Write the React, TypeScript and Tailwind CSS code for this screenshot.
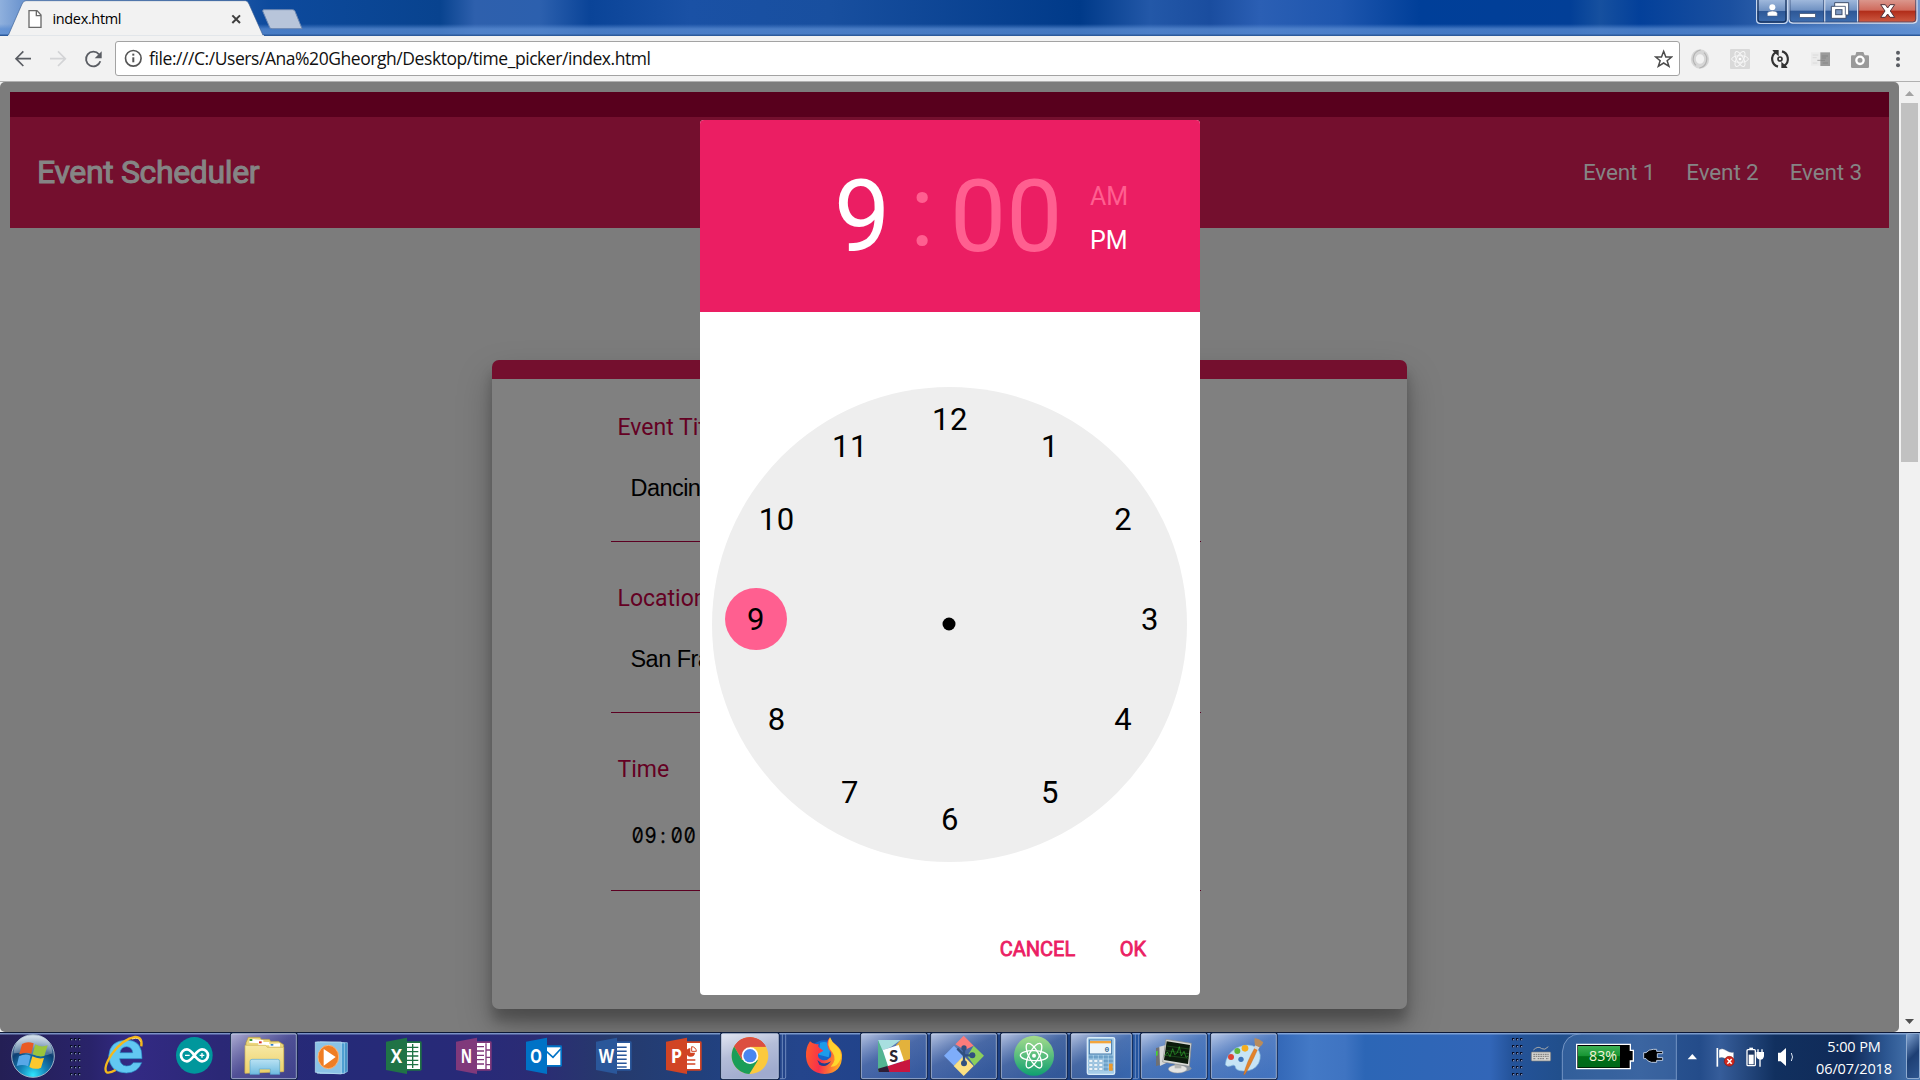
import React from "react";

const UI = "font-['Open_Sans','Noto_Sans',sans-serif]";

type Pt = { n: number; x: number; y: number };
const DIAL: Pt[] = Array.from({ length: 12 }, (_, i) => {
  const n = i + 1;
  const a = (n * Math.PI) / 6;
  return { n, x: 238 + 200 * Math.sin(a) + (n === 9 ? 6 : 0), y: 232 - 200 * Math.cos(a) };
});

function Svg({ vb, w, h, className = "", children }: { vb: string; w: number; h: number; className?: string; children: React.ReactNode }) {
  return (
    <svg viewBox={vb} width={w} height={h} className={"block shrink-0 " + className}>
      {children}
    </svg>
  );
}

/* ---------- window frame ---------- */

function TitleBar() {
  return (
    <div className="relative flex h-9 shrink-0 items-start bg-[#083f93] bg-[linear-gradient(180deg,rgba(90,140,210,0)_0,rgba(90,140,210,0)_24px,rgba(90,140,210,.75)_29px,rgba(90,140,210,.75)_34px,#2c5a9b_35px),linear-gradient(90deg,#8fb0dd_0,#6f97d0_20px,#0d4a9d_270px,#08438f_440px,#2e60ad_475px,#2c60ae_540px,#0a4498_590px,#1a51a5_690px,#184f9f_830px,#003a89_1080px,#2358a8_1150px,#1a4d9f_1210px,#2b5fb4_1260px,#1e56ae_1340px,#003f99_1420px,#023f97_1570px,#16509f_1600px,#03409a_1640px,#1b50a0_1730px,#6f97cf_1920px)]">
      <div className="relative ml-2 flex h-9 w-[256px] items-center">
        <Svg vb="24 0 768 108" w={256} h={36} className="absolute inset-0">
          <path d="M24 108 L66 12 Q70 2 78 2 H736 Q743 2 747 12 L790 108Z" fill="#f2f2f2" stroke="#3a5f96" strokeWidth="2" />
          <path d="M24 108H792" stroke="#f2f2f2" strokeWidth="5" />
          <path d="M87 32H111L123 45V82H87Z" fill="#fff" stroke="#6a6a6a" strokeWidth="4" />
          <path d="M109 32V47H123" fill="none" stroke="#6a6a6a" strokeWidth="4" />
          <path d="M697 46L720 69M720 46L697 69" stroke="#3f3f3f" strokeWidth="6" />
        </Svg>
        <span className={`${UI} relative ml-[44.5px] mt-[2px] text-[14.5px] leading-none tracking-[-0.35px] text-black`}>index.html</span>
      </div>
      <Svg vb="786 0 126 108" w={42} h={36} className="-ml-[2px]">
        <path d="M790 29H878Q883 29 885 34L906 86H816Q811 86 809 82L788 33Z" fill="#b8c5da" stroke="#6c87b1" strokeWidth="3" />
      </Svg>
      <div className="flex-1" />
      <Svg vb="765 0 495 78" w={165} h={26}>
        <defs>
          <linearGradient id="glass" x1="0" y1="0" x2="0" y2="1">
            <stop offset="0" stopColor="#a5bddf" /><stop offset=".48" stopColor="#6f91c2" /><stop offset=".5" stopColor="#2d5796" /><stop offset="1" stopColor="#3e6eb0" />
          </linearGradient>
          <linearGradient id="red" x1="0" y1="0" x2="0" y2="1">
            <stop offset="0" stopColor="#dc9c92" /><stop offset=".48" stopColor="#cf6a5c" /><stop offset=".5" stopColor="#b02b18" /><stop offset="1" stopColor="#cf5d45" />
          </linearGradient>
        </defs>
        <path d="M770 -4V60Q770 70 780 70H852Q862 70 862 60V-4Z" fill="url(#glass)" stroke="#c6d6ee" strokeWidth="4" />
        <path d="M774 -4V58Q774 66 782 66H850Q858 66 858 58V-4" fill="none" stroke="#16325f" strokeWidth="4" />
        <circle cx="817" cy="22" r="9" fill="#fff" />
        <path d="M802 48V40Q804 33 817 33Q831 33 832 40V48Z" fill="#fff" stroke="#4a5d80" strokeWidth="1.5" />
        <path d="M867 -4V60Q867 69 877 69H974V-4Z" fill="url(#glass)" />
        <path d="M974 -4V69H1073V-4Z" fill="url(#glass)" />
        <path d="M1073 -4V69H1240Q1250 69 1250 60V-4Z" fill="url(#red)" />
        <path d="M867 -4V58Q867 69 877 69H1240Q1251 69 1251 58V-4M974 0V69M1073 0V69" fill="none" stroke="#d2ddef" strokeWidth="4" />
        <path d="M870 -4V57Q870 66 880 66H1238Q1247 66 1247 57V-4M971 0V66M1076 0V66" fill="none" stroke="#27406d" strokeWidth="2" />
        <rect x="899" y="41" width="47" height="11" fill="#fff" stroke="#41516f" strokeWidth="2" />
        <path d="M1004 8H1046V45H1038V55H994V19H1004Z" fill="#fff" stroke="#41516f" strokeWidth="3" />
        <path d="M1004 19H1036V45" fill="none" stroke="#41516f" strokeWidth="2.5" />
        <rect x="1007" y="29" width="19" height="15" fill="#7d98c2" stroke="#41516f" strokeWidth="3" />
        <path d="M1142 14H1156L1163 24L1170 14H1184L1171 33L1184 52H1170L1163 42L1156 52H1142L1155 33Z" fill="#fff" stroke="#4f3038" strokeWidth="3" />
      </Svg>
    </div>
  );
}

function Toolbar() {
  return (
    <div className="flex h-[46px] shrink-0 items-start border-b border-[#b0b0b0] bg-[#f2f2f2]">
      <Svg vb="0 108 345 135" w={115} h={45}>
        <path d="M93 176H50M70 154L48 176L70 198" fill="none" stroke="#5a5d63" strokeWidth="5" />
        <path d="M150 176H193M174 154L196 176L174 198" fill="none" stroke="#d3d4d6" strokeWidth="5" />
        <path d="M297 163A22 22 0 1 0 301 184" fill="none" stroke="#5a5d63" strokeWidth="5.5" />
        <path d="M305 154V175H284Z" fill="#5a5d63" />
      </Svg>
      <div className="mt-[5px] flex h-[35px] w-[1565px] items-center rounded-[3px] border border-[#a3a3a3] bg-white">
        <Svg vb="372 150 56 56" w={18.6} h={18.6} className="ml-2">
          <circle cx="400" cy="178" r="23.5" fill="none" stroke="#555" strokeWidth="5" />
          <path d="M400 175V190" stroke="#555" strokeWidth="6" />
          <path d="M400 164V170" stroke="#555" strokeWidth="6" />
        </Svg>
        <span className={`${UI} ml-[6.5px] flex-1 text-[17.5px] leading-none tracking-[-0.44px] text-[#111]`}>file:///C:/Users/Ana%20Gheorgh/Desktop/time_picker/index.html</span>
        <Svg vb="460 148 58 60" w={19.3} h={20} className="mr-[6px]">
          <path d="M489 155L495.500 172H513L499.500 183L505 200L489 190L473 200L478.500 183L465 172H482.500Z" fill="#fff" stroke="#4c4c4c" strokeWidth="4.500" />
        </Svg>
      </div>
      <Svg vb="540 108 720 135" w={240} h={45}>
        <ellipse cx="600" cy="177" rx="20" ry="22" fill="none" stroke="#d6d6d6" strokeWidth="15" />
        <path d="M602 150A27 27 0 0 0 588 196M598 204A27 27 0 0 0 612 158" fill="none" stroke="#b4b4b4" strokeWidth="3.500" />
        <rect x="690" y="147" width="60" height="60" rx="3" fill="#d9d9d9" />
        <g fill="none" stroke="#f6f6f6" strokeWidth="3">
          <ellipse cx="720" cy="177" rx="25" ry="10" />
          <ellipse cx="720" cy="177" rx="25" ry="10" transform="rotate(60 720 177)" />
          <ellipse cx="720" cy="177" rx="25" ry="10" transform="rotate(120 720 177)" />
        </g>
        <circle cx="720" cy="177" r="4" fill="#fff" />
        <g fill="none" stroke="#333" strokeWidth="6.500">
          <path d="M834 200A24 24 0 0 1 827 157" />
          <path d="M846 154A24 24 0 0 1 853 197" />
          <circle cx="840" cy="177" r="6" strokeWidth="5" />
        </g>
        <path d="M817 150H836V169L829 163L822 157Z M863 204H844V185L851 191L858 197Z" fill="#333" />
        <rect x="933" y="157" width="28" height="40" fill="#ebebeb" />
        <rect x="961" y="157" width="29" height="41" fill="#9b9b9b" />
        <path d="M938 165H955M938 173H950M938 189H952" stroke="#dadada" strokeWidth="3" />
        <path d="M952 181H961" stroke="#a5a5a5" strokeWidth="3" />
        <path d="M961 181H975M965 168H984M965 174H978M968 189H984" stroke="#858585" strokeWidth="2.500" />
        <path d="M1056 166H1066L1069 156H1090L1094 166H1104Q1107 166 1107 170V200Q1107 204 1103 204H1057Q1053 204 1053 200V170Q1053 166 1056 166Z" fill="#9a9a9a" />
        <circle cx="1080" cy="181" r="11" fill="#9a9a9a" stroke="#fff" strokeWidth="7" />
        <g fill="#5a5d63"><circle cx="1194" cy="158" r="6" /><circle cx="1194" cy="177" r="6" /><circle cx="1194" cy="196" r="6" /></g>
      </Svg>
    </div>
  );
}

/* ---------- web page ---------- */

function Field({ label, value, className = "", mono = false }: { label: string; value: string; className?: string; mono?: boolean }) {
  return (
    <div className={"flex w-[590px] flex-col border-b border-[#5c0022] " + className}>
      <label className="ml-[6.5px] h-7 pt-px text-[23px] leading-7 text-[#640023]">{label}</label>
      {mono ? (
        <div className="ml-[20px] mt-[39px] flex h-7 text-[21px] leading-7 text-black font-['Inter',sans-serif] [-webkit-text-stroke:0.25px_#000]" style={{ fontFeatureSettings: '"zero"' }}>
          {value.split("").map((c, i) => (
            <span key={i} className="flex w-[13px] justify-center"><span className="scale-x-90">{c}</span></span>
          ))}
        </div>
      ) : (
        <div className="ml-[19.5px] mt-[33px] h-7 text-[23.5px] leading-7 tracking-[-0.55px] text-black font-['Liberation_Sans',Arial,sans-serif]">{value}</div>
      )}
    </div>
  );
}

function TimePicker() {
  return (
    <div className="absolute left-[700px] top-[38px] flex h-[875px] w-[500px] flex-col overflow-hidden rounded-[4px] bg-white">
      <div className="flex h-[192px] shrink-0 bg-[#eb1e63]">
        <div className="ml-[134px] mt-[38px] flex text-[100px] leading-[117px] text-[#ff5f90]">
          <span className="w-[75px] text-white">9</span>
          <span className="-mt-[6px] ml-px w-[40px]">:</span>
          <span className="w-[113px]">00</span>
        </div>
        <div className="ml-[27px] mt-[55px] flex flex-col text-[25px] leading-[44px]">
          <span className="h-11 text-[#ff5f90]">AM</span>
          <span className="h-11 text-white">PM</span>
        </div>
      </div>
      <div className="relative ml-[12px] mt-[75px] size-[475px] shrink-0 rounded-full bg-[#eeeeee]">
        {DIAL.map(({ n, x, y }) => (
          <span
            key={n}
            className={"absolute flex size-[62px] -translate-1/2 items-center justify-center rounded-full pt-[2px] text-[31px] tracking-[0.5px] text-black " + (n === 9 ? "bg-[#ff5f90]" : "")}
            style={{ left: x, top: y }}
          >
            {n}
          </span>
        ))}
        <span className="absolute left-[237px] top-[237px] size-[13px] -translate-1/2 rounded-full bg-black" />
      </div>
      <div className="mt-[72px] flex justify-end pr-[54px] text-[20px] leading-[30px] text-[#eb1e63] [-webkit-text-stroke:0.8px_#eb1e63]">
        <span className="mr-[44.5px]">CANCEL</span>
        <span>OK</span>
      </div>
    </div>
  );
}

function Page() {
  return (
    <div className="flex min-h-0 flex-1 bg-[#f1f1f1]">
      <div className="relative w-[1899px] overflow-hidden rounded-[5px] bg-[#7c7c7c] px-[10px] pt-[10px] font-['Roboto',sans-serif]">
        <div className="h-[25px] bg-[#58001d]" />
        <header className="flex h-[111px] items-center justify-between bg-[#740f2e] px-[27px] text-[#858585]">
          <h1 className="-mt-[2px] text-[32px] tracking-[-0.36px] [-webkit-text-stroke:1px_#858585]">Event Scheduler</h1>
          <nav className="flex gap-[31px] text-[22.5px] tracking-[-0.12px]">
            <a>Event 1</a>
            <a>Event 2</a>
            <a>Event 3</a>
          </nav>
        </header>
        <section className="ml-[482px] mt-[132px] flex h-[649px] w-[915px] flex-col overflow-visible rounded-[7px] border-t-[19px] border-[#740f2e] bg-[#808080] pl-[119px] shadow-[0_17px_35px_rgba(0,0,0,.25),0_12px_12px_rgba(0,0,0,.22)]">
          <Field label="Event Title" value="Dancing" className="mt-[34px] h-[129px]" />
          <Field label="Location" value="San Francisco" className="mt-[42px] h-[129px]" />
          <Field label="Time" value="09:00" mono className="mt-[42px] h-[136px]" />
        </section>
        <TimePicker />
      </div>
      <div className="flex w-[21px] flex-col items-center">
        <Svg vb="0 0 21 21" w={21} h={21}><path d="M6 14L10.500 9L15 14Z" fill="#a3a3a3" /></Svg>
        <div className="h-[359px] w-[17px] bg-[#c1c1c1]" />
        <div className="flex-1" />
        <Svg vb="0 0 21 21" w={21} h={21}><path d="M6 8L10.500 13L15 8Z" fill="#505050" /></Svg>
      </div>
    </div>
  );
}

/* ---------- taskbar ---------- */

function OfficeApp({ x, dark, light, letter, children }: { x: number; dark: string; light: string; letter: string; children?: React.ReactNode }) {
  return (
    <g transform={`translate(${x} 0)`}>
      <rect x="60" y="64" width="47" height="88" rx="4" fill={dark} />
      <rect x="62" y="69" width="40" height="78" fill="#fff" />
      {children}
      <path d="M0 65L63 53V162L0 150Z" fill={light} />
      <text x="31" y="128" textAnchor="middle" fontFamily="Open Sans, sans-serif" fontWeight="700" fontSize="56" fill="#fff" textLength={letter === "W" ? 46 : 34} lengthAdjust="spacingAndGlyphs">{letter}</text>
    </g>
  );
}

const TILES: { x: number; open?: "plain" | "active" | "stack" | "activeStack"; art: React.ReactNode }[] = [
  {
    x: 267,
    art: (
      <>
        <path d="M425 128H400Q392 139 379 138Q361 136 359 116H426Q428 60 379 60Q329 62 326 108Q329 158 379 159Q414 158 425 128ZM360 98Q363 80 380 80Q397 81 398 98Z" fill="#62c8f2" stroke="#2b8ac4" strokeWidth="2" />
        <path d="M424 79Q428 50 405 51Q370 56 337 100Q308 143 320 157Q330 160 347 150" fill="none" stroke="#f4b81c" strokeWidth="7" />
        <path d="M421 65Q418 50 396 57" fill="none" stroke="#fde27a" strokeWidth="3" />
      </>
    ),
  },
  {
    x: 477,
    art: (
      <>
        <circle cx="583" cy="106" r="55" fill="#00979c" />
        <g fill="none" stroke="#fff" strokeWidth="8">
          <path d="M583 106C575 95 569 88 561 88A18 18 0 0 0 561 124C569 124 575 117 583 106C591 95 597 88 606 88A18 18 0 0 1 606 124C597 124 591 117 583 106Z" />
          <path d="M555 106H569M599 106H613M606 99V113" strokeWidth="4" />
        </g>
      </>
    ),
  },
  {
    x: 687,
    open: "active",
    art: (
      <>
        <path d="M738 68L745 52H780L784 58H808L812 64H835L851 74V152L735 158Z" fill="#ecd77c" stroke="#b29842" strokeWidth="2" />
        <path d="M748 62L757 57L790 60V70L748 68Z M775 66H808V76H775Z M808 72L840 70V80H808Z" fill="#fff" />
        <path d="M749 57H757V63H749Z" fill="#3d9a35" /><path d="M777 64H785V70H777Z" fill="#d8382a" /><path d="M812 72H820V77H812Z" fill="#2f7fc8" />
        <path d="M735 76H797L802 82H851V155L735 160Z" fill="url(#folder)" stroke="#cdb254" strokeWidth="2" />
        <path d="M750 163V124Q750 118 756 118H833Q839 118 839 124V163H811V147H778V163Z" fill="url(#ice)" stroke="#5ba9d4" strokeWidth="2" />
      </>
    ),
  },
  {
    x: 897,
    art: (
      <>
        <path d="M960 66L1042 68V155L1030 160L960 160Z" fill="#3b8dc4" stroke="#a6d8f2" strokeWidth="2" />
        <path d="M952 66L1034 69V160L952 160Z" fill="#4f9fd2" stroke="#b5dff5" strokeWidth="2" />
        <path d="M946 66H1024V162L946 157Z" fill="#8bc3e6" stroke="#c4e6f6" strokeWidth="2" />
        <ellipse cx="985" cy="111" rx="31" ry="35" fill="#ef7d24" stroke="#f9b57a" strokeWidth="3" />
        <path d="M971 87L1007 111L971 137Z" fill="#fff" />
      </>
    ),
  },
  {
    x: 1107,
    art: (
      <OfficeApp x={1158} dark="#1f7244" light="#207346" letter="X">
        <path d="M63 82H97M63 95H97M63 108H97M63 121H97M63 134H97M80 72V144" stroke="#1f7244" strokeWidth="4" />
      </OfficeApp>
    ),
  },
  {
    x: -123,
    art: (
      <OfficeApp x={-72} dark="#80397b" light="#80397b" letter="N">
        <path d="M63 80H84M63 93H84M63 106H84M63 119H84M63 132H84M90 70V148M92 90H104M92 112H104M92 134H104" stroke="#80397b" strokeWidth="4" />
      </OfficeApp>
    ),
  },
  {
    x: 87,
    art: (
      <g transform="translate(138 0)">
        <rect x="60" y="76" width="48" height="64" rx="4" fill="#0072c6" />
        <rect x="62" y="82" width="41" height="53" fill="#fff" />
        <path d="M62 95L81 112L104 87" fill="none" stroke="#0072c6" strokeWidth="5" />
        <path d="M0 65L63 53V162L0 150Z" fill="#0072c6" />
        <text x="30" y="129" textAnchor="middle" fontFamily="Open Sans, sans-serif" fontWeight="700" fontSize="58" fill="#fff" textLength="36" lengthAdjust="spacingAndGlyphs">O</text>
      </g>
    ),
  },
  {
    x: 297,
    art: (
      <OfficeApp x={348} dark="#2a579a" light="#2a579a" letter="W">
        <path d="M63 82H92M63 94H92M63 106H92M63 118H92M63 130H92M63 141H92" stroke="#2a579a" strokeWidth="4.500" />
      </OfficeApp>
    ),
  },
  {
    x: 507,
    art: (
      <OfficeApp x={558} dark="#d14424" light="#d14424" letter="P">
        <path d="M73 84A13 13 0 1 0 87 98H73Z" fill="#d14424" />
        <path d="M77 80A14 14 0 0 1 91 94H77Z" fill="#fff" stroke="#d14424" strokeWidth="3" />
        <path d="M63 120H88M63 132H88" stroke="#d14424" strokeWidth="5" />
      </OfficeApp>
    ),
  },
  {
    x: 717,
    open: "activeStack",
    art: (
      <>
        <circle cx="810" cy="107" r="55" fill="#fbc93d" />
        <path d="M810 107L762.400 79.500A55 55 0 0 1 857.600 79.500H810Z" fill="#dc4437" />
        <path d="M810 52A55 55 0 0 0 762.400 79.500L786 120L810 80H857.600A55 55 0 0 0 810 52Z" fill="#dc4e41" />
        <path d="M762.400 79.500A55 55 0 0 0 808 162L834 121L786 120Z" fill="#1a9d58" />
        <circle cx="810" cy="107" r="25" fill="#fff" />
        <circle cx="810" cy="107" r="20" fill="#4a86f0" />
      </>
    ),
  },
  {
    x: 927,
    art: (
      <>
        <circle cx="1033" cy="108" r="47" fill="#1565c9" />
        <path d="M1020 68Q1045 60 1052 82L1046 112L1016 104Z" fill="#1c9bea" />
        <path d="M990 64Q1000 75 1016 72Q1012 82 1022 86L1030 92L1014 102Q1012 116 1026 120Q1040 124 1052 112Q1058 100 1046 88Q1036 66 1050 52Q1054 66 1068 74Q1085 88 1086 104Q1088 158 1034 162Q982 158 978 110Q976 84 990 64Z" fill="url(#fire)" />
        <path d="M1050 52Q1056 68 1070 78Q1086 92 1082 116Q1072 142 1052 140Q1072 118 1058 98Q1036 76 1050 52Z" fill="#ffe32e" opacity=".85" />
        <path d="M1012 120Q1030 138 1053 124Q1038 146 1018 134Z" fill="#213f8e" />
      </>
    ),
  },
  {
    x: 1137,
    open: "plain",
    art: (
      <g>
        <path d="M1194 60H1262L1232 82L1204 92Z" fill="#a8dfe0" />
        <path d="M1262 60H1290V118L1268 128L1248 76Z" fill="#e3b23c" />
        <path d="M1194 60L1222 124L1230 142L1194 156Z" fill="#54b492" />
        <path d="M1222 138L1290 118V156H1228Z" fill="#c8153f" />
        <path d="M1194 146L1222 138L1228 156H1196Z" fill="#2e1d35" />
        <path d="M1208 90L1256 75L1272 122L1224 138Z" fill="#fff" />
        <text x="1241" y="125" textAnchor="middle" fontFamily="Lato, sans-serif" fontWeight="900" fontSize="48" fill="#2b2530">S</text>
      </g>
    ),
  },
  {
    x: -93,
    open: "plain",
    art: (
      <>
        <path d="M11 47L41 77L14 90L-14 73Z" fill="#fb7c7b" />
        <path d="M41 77L72 107L43 137L22 108Z" fill="#8bcf5c" />
        <path d="M-18 77L12 107L-18 137L-48 107Z" fill="#7eadfa" />
        <path d="M11 107L41 138L11 168L-19 138Z" fill="#fbe183" />
        <path d="M12 82V132M12 106H36M-8 86L12 106" stroke="#31507f" strokeWidth="7" />
        <circle cx="12" cy="84" r="8" fill="#31507f" /><circle cx="12" cy="130" r="9" fill="#31507f" /><circle cx="37" cy="106" r="9" fill="#31507f" />
      </>
    ),
  },
  {
    x: 117,
    open: "plain",
    art: (
      <>
        <circle cx="222" cy="107" r="60" fill="url(#atom)" />
        <g fill="none" stroke="#fff" strokeWidth="4">
          <ellipse cx="222" cy="107" rx="41" ry="15" transform="rotate(2 222 107)" />
          <ellipse cx="222" cy="107" rx="41" ry="15" transform="rotate(62 222 107)" />
          <ellipse cx="222" cy="107" rx="41" ry="15" transform="rotate(118 222 107)" />
        </g>
        <circle cx="222" cy="107" r="6" fill="#fff" />
      </>
    ),
  },
  {
    x: 327,
    open: "stack",
    art: (
      <>
        <rect x="382" y="53" width="82" height="110" rx="5" fill="#a5cce8" stroke="#d8ebf7" strokeWidth="4" />
        <rect x="388" y="60" width="67" height="42" fill="#eaf4fb" stroke="#3f74a5" strokeWidth="3" />
        <rect x="390" y="63" width="63" height="7" fill="#f3a53c" />
        <text x="441" y="96" textAnchor="middle" fontFamily="Liberation Mono, monospace" fontSize="24" fontWeight="700" fill="#3f6f98">0</text>
        {[0, 1, 2, 3].map((r) => [0, 1, 2, 3, 4].map((c) => (
          <rect key={`${r}-${c}`} x={387 + c * 15} y={107 + r * 12} width="11" height="8" rx="1" fill={r && c < 3 ? "#f3f8fb" : "#6fa3cb"} stroke="#5b8fb8" />
        )))}
        <rect x="447" y="131" width="11" height="21" fill="#ee9a2c" />
      </>
    ),
  },
  {
    x: 537,
    open: "plain",
    art: (
      <>
        <path d="M588 84L604 80V134L588 138Z" fill="#6f7072" /><path d="M598 80L620 74V128L600 138Z" fill="#d7d8d8" />
        <path d="M588 94L593 92V106L588 108Z" fill="#49d32f" />
        <ellipse cx="672" cy="145" rx="22" ry="9" fill="#8c97a4" />
        <ellipse cx="653" cy="147" rx="28" ry="12" fill="#e4e4e2" stroke="#9a9b99" strokeWidth="1.500" />
        <path d="M644 132H664V145H644Z" fill="#b4b5b3" />
        <path d="M618 58L694 70L688 139L608 126Z" fill="#d9dad7" stroke="#8a8b88" strokeWidth="2" />
        <path d="M620 64L690 75L684 132L612 120Z" fill="#0b1a0b" />
        <path d="M620 78L688 87M618 92L687 101M616 106L686 115" stroke="#225c22" strokeWidth="2" />
        <path d="M614 108L622 96L630 110L638 86L644 104L652 98L658 80L664 108L672 94L678 112L684 108" fill="none" stroke="#2fa82d" strokeWidth="2" />
      </>
    ),
  },
  {
    x: 747,
    open: "plain",
    art: (
      <>
        <path d="M796 134Q798 104 828 84Q868 66 890 84Q908 102 896 130Q882 154 850 153Q826 152 826 140Q824 132 812 138Q800 142 796 134Z" fill="#c7e4f5" stroke="#84b8dc" strokeWidth="2" />
        <circle cx="843" cy="118" r="8" fill="#3f74b8" />
        <circle cx="813" cy="111" r="9" fill="#dd4437" /><circle cx="832" cy="93" r="9" fill="#5fb53c" /><circle cx="855" cy="85" r="10" fill="#f5ad1e" />
        <path d="M851 164Q858 130 884 84L893 88Q872 136 855 163Z" fill="#e3832a" stroke="#b35e17" strokeWidth="1" />
        <path d="M881 84L886 75L899 80L894 91Z" fill="#d4d6d8" />
        <path d="M885 76Q882 62 884 54L897 58L910 67Q908 76 898 82Z" fill="#b98b5a" />
      </>
    ),
  },
];

function TaskTile({ x, open, art }: (typeof TILES)[number]) {
  const stack = open === "stack" || open === "activeStack";
  const active = open === "activeStack";
  const edge = x + (open === "activeStack" ? 180 : stack ? 189 : 204);
  return (
    <Svg vb={`${x} 36 210 144`} w={70} h={48}>
      {open && (
        <>
          {stack && (
            <path d={`M${edge + 3} 41H${edge + 10}V176H${edge + 3}M${edge + 12} 41H${edge + 16}Q${edge + 20} 41 ${edge + 20} 46V171Q${edge + 20} 176 ${edge + 16} 176H${edge + 10}`} fill="none" stroke="#7f9acb" strokeWidth="3" opacity=".8" />
          )}
          <rect x={x + 5} y="39" width={edge - x - 5} height="139" rx="5" fill="none" stroke="#0f2042" strokeWidth="4" />
          <rect x={x + 7} y="41" width={edge - x - 9} height="135" rx="4" fill={active ? "url(#tileActive)" : open === "active" ? "url(#tileDim)" : "url(#tile)"} stroke="#c3cfe6" strokeOpacity=".85" strokeWidth="2.500" />
        </>
      )}
      {art}
    </Svg>
  );
}

function Grip() {
  return (
    <Svg vb="0 0 33 120" w={11} h={40}>
      {[0, 1, 2, 3, 4, 5].map((r) => [0, 1, 2].map((c) => (
        <g key={`${r}${c}`}>
          <rect x={c * 12} y={r * 21} width="7" height="7" fill="#080e26" />
          <rect x={c * 12 + 3} y={r * 21 + 3} width="4" height="4" fill="#8391b8" />
        </g>
      )))}
    </Svg>
  );
}

function Taskbar() {
  return (
    <div className="flex h-12 shrink-0 items-start bg-[linear-gradient(180deg,#0c1836_0,#0c1836_1px,rgba(150,180,225,.75)_1px,rgba(150,180,225,.75)_2px,transparent_3px),linear-gradient(90deg,#241f55_0,#29236a_90px,#332a84_130px,#2b2876_220px,#252a78_330px,#282a78_480px,#2b2c74_540px,#263a6c_610px,#21407c_700px,#24458c_800px,#20428a_900px,#193f80_1070px,#2458a5_1150px,#3064b4_1270px,#4379c6_1310px,#3f74c2_1345px,#2c66b6_1365px,#3266b8_1490px,#24539a_1512px,#214f8c_1560px,#2c5794_1640px,#244c8a_1700px,#365d9a_1720px,#11305f_1775px,#102a58_1850px,#2b5590_1885px,#4f7db5_1920px)]">
      <svg width="0" height="0" className="block">
        <defs>
          <linearGradient id="tile" x1="0" y1="0" x2=".7" y2="1"><stop offset="0" stopColor="#d3dcf2" stopOpacity=".85" /><stop offset=".5" stopColor="#8fa9da" stopOpacity=".38" /><stop offset="1" stopColor="#7fa4e0" stopOpacity=".25" /></linearGradient>
          <linearGradient id="tileDim" x1="0" y1="0" x2="1" y2="1"><stop offset="0" stopColor="#dcdcf2" stopOpacity=".75" /><stop offset=".5" stopColor="#8a8ac4" stopOpacity=".4" /><stop offset="1" stopColor="#6a6cb0" stopOpacity=".35" /></linearGradient>
          <linearGradient id="tileActive" x1="0" y1="0" x2=".4" y2="1"><stop offset="0" stopColor="#e2e6f2" /><stop offset=".5" stopColor="#b4bdd8" /><stop offset="1" stopColor="#a0abce" /></linearGradient>
          <linearGradient id="folder" x1="0" y1="0" x2="0" y2="1"><stop offset="0" stopColor="#f7e9a4" /><stop offset="1" stopColor="#ecd069" /></linearGradient>
          <linearGradient id="ice" x1="0" y1="0" x2="0" y2="1"><stop offset="0" stopColor="#b9e2f3" /><stop offset="1" stopColor="#6fbbe0" /></linearGradient>
          <linearGradient id="fire" x1="0" y1="0.3" x2="1" y2=".5"><stop offset="0" stopColor="#ff5a2c" /><stop offset=".45" stopColor="#f8304c" /><stop offset="1" stopColor="#ffb020" /></linearGradient>
          <linearGradient id="atom" x1="0" y1="0" x2="0" y2="1"><stop offset="0" stopColor="#a5dc8c" /><stop offset="1" stopColor="#0fa070" /></linearGradient>
          <radialGradient id="orb" cx=".5" cy=".95" r=".9"><stop offset="0" stopColor="#2fe6ff" /><stop offset=".35" stopColor="#1583b8" /><stop offset=".7" stopColor="#0d3f73" /><stop offset="1" stopColor="#7f9cbc" /></radialGradient>
          <linearGradient id="gloss" x1="0" y1="0" x2="0" y2="1"><stop offset="0" stopColor="#e6eef5" stopOpacity=".85" /><stop offset="1" stopColor="#a9bccf" stopOpacity=".35" /></linearGradient>
          <linearGradient id="green" x1="0" y1="0" x2="0" y2="1"><stop offset="0" stopColor="#3eb055" /><stop offset=".45" stopColor="#179634" /><stop offset=".5" stopColor="#006f18" /><stop offset="1" stopColor="#00691a" /></linearGradient>
        </defs>
      </svg>
      <Svg vb="0 36 210 144" w={70} h={48}>
        <circle cx="99" cy="108" r="64" fill="url(#orb)" stroke="#9fb4c8" strokeWidth="3" />
        <path d="M41 100Q44 47 99 46Q154 47 157 100Q128 114 99 104Q68 96 41 100Z" fill="url(#gloss)" />
        <path d="M66 72Q82 62 101 70L94 101Q78 94 58 103Z" fill="#ea5a24" />
        <path d="M106 73Q122 84 143 76L133 108Q116 112 98 103Z" fill="#9bc53c" />
        <path d="M57 109Q76 99 92 107L84 139Q68 131 50 138Z" fill="#58a8e8" />
        <path d="M97 109Q114 118 132 114L123 143Q106 151 88 141Z" fill="#fcc82e" />
      </Svg>
      <div className="mt-[6px] w-[19px]"><Grip /></div>
      {TILES.map((t) => <TaskTile key={t.x} {...t} />)}
      <div className="flex-1" />
      <div className="mt-[6px] w-[12px]"><Grip /></div>
      <Svg vb="249 36 831 144" w={277} h={48} className="-ml-px">
        <path d="M280 90Q295 76 305 86Q314 92 325 80" fill="none" stroke="#a5a8aa" strokeWidth="3" />
        <rect x="274" y="96" width="58" height="27" rx="3" fill="#d3d3d0" stroke="#77797a" strokeWidth="2" />
        <path d="M280 103H326M280 109H326M280 116H288M293 116H313M318 116H326" stroke="#777" strokeWidth="3" strokeDasharray="5 2" />
        <path d="M367 180V96Q372 42 425 41H709V180Z" fill="#7fa5dc" fillOpacity=".18" stroke="#7495c4" strokeWidth="3" />
        <path d="M410 73H571V91H580V123H571V146H410Z" fill="#000" stroke="#fff" strokeWidth="4" />
        <rect x="414" y="78" width="126" height="64" fill="url(#green)" />
        <text x="489" y="124" textAnchor="middle" fontFamily="Open Sans, sans-serif" fontSize="41" fill="#f5f5d8" textLength="84" lengthAdjust="spacingAndGlyphs">83%</text>
        <path d="M611 98H618Q626 88 640 88H650V94H668V101H652V113H668V121H650V127H634Q622 124 618 116H611Z" fill="#000" stroke="#b8c8df" strokeWidth="3" />
        <path d="M743 118L757 102L771 118Z" fill="#fff" />
        <path d="M832 84V140" stroke="#fff" strokeWidth="5" />
        <path d="M837 89Q848 83 858 91Q868 99 881 97V120Q866 122 856 116Q846 110 837 114Z" fill="#fff" stroke="#46556f" strokeWidth="1" />
        <circle cx="868" cy="124" r="15" fill="#d2281c" stroke="#7b120c" strokeWidth="1.500" />
        <path d="M862 117L875 131M875 117L862 131" stroke="#fff" strokeWidth="4.500" />
        <rect x="921" y="89" width="25" height="48" rx="3" fill="#1b3560" stroke="#fff" strokeWidth="4" />
        <rect x="928" y="83" width="11" height="6" fill="#fff" /><rect x="926" y="104" width="15" height="29" fill="#fff" />
        <path d="M951 98H970V108Q968 117 961 117Q952 116 951 108ZM954 88V98M966 88V98M960 117V140" fill="#fff" stroke="#fff" strokeWidth="4" />
        <path d="M1014 98H1022L1038 84V138L1022 124H1014Z" fill="#fff" />
        <path d="M1054 99Q1061 111 1054 123" fill="none" stroke="#dbe4f2" strokeWidth="3" />
      </Svg>
      <div className={`${UI} flex w-[106px] flex-col items-center pl-[2px] pt-[4px] text-[14.5px] leading-[22px] tracking-[-0.1px] text-white`}>
        <span>5:00 PM</span>
        <span>06/07/2018</span>
      </div>
      <div className="mt-px h-[46px] w-[14px] rounded-[2px] border border-[#8fabd0] bg-[linear-gradient(135deg,#7fa2d0,#1d3f74_50%,#2e5690)]" />
    </div>
  );
}

export default function App() {
  return (
    <div className="flex h-[1080px] w-[1920px] flex-col overflow-hidden bg-[#7c7c7c]">
      <TitleBar />
      <Toolbar />
      <Page />
      <Taskbar />
    </div>
  );
}
